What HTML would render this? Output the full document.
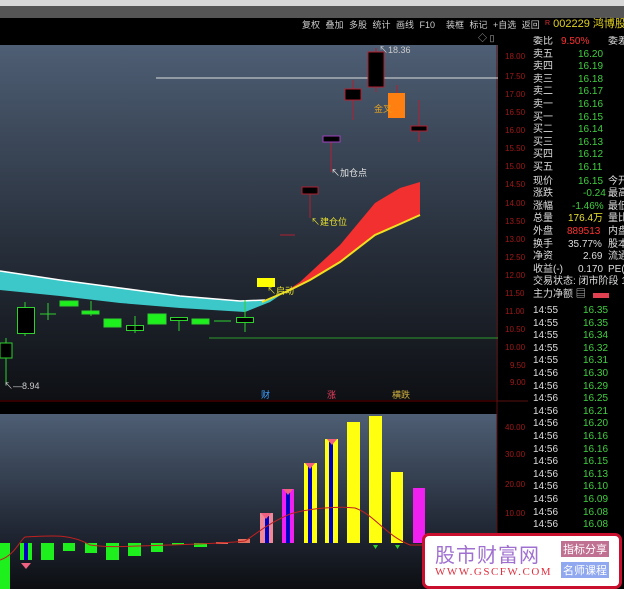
<!DOCTYPE html>
<html><head><meta charset="utf-8"><style>
body{margin:0;width:624px;height:589px;overflow:hidden;background:#000;font-family:"Liberation Sans","Noto Sans CJK SC",sans-serif;position:relative}
.t{position:absolute;font-size:10px;white-space:nowrap;line-height:12px}
.ax{position:absolute;left:505px;font-size:8px;color:#a01818}
.w{color:#e8e8e8}.g{color:#3fcf3f}.r{color:#ff3030}.y{color:#e8e030}
.rp div{white-space:nowrap;position:relative;height:12.6px}
</style></head><body>
<div style="position:absolute;left:0;top:0;width:624px;height:6px;background:#d8d8d8"></div>
<div style="position:absolute;left:0;top:6px;width:624px;height:12px;background:#555"></div>
<div class="t w" style="left:302px;top:19px;font-size:9px;color:#ccc;word-spacing:3px">复权 叠加 多股 统计 画线 F10 &nbsp;装框 标记 +自选 返回</div>
<div class="t" style="left:545px;top:18px;font-size:11px;color:#e0d020"><span style="color:#e03030;font-size:7px;vertical-align:top">R</span> 002229 鸿博股份</div>
<div class="t" style="left:478px;top:32px;color:#aaa;font-size:9px">◇ ▯</div>
<svg style="position:absolute;left:0;top:0" width="624" height="589">
<defs>
<linearGradient id="bg" x1="0" y1="0" x2="0" y2="1"><stop offset="0" stop-color="#4e5e74"/><stop offset="0.55" stop-color="#28303c"/><stop offset="1" stop-color="#0e1014"/></linearGradient>
<linearGradient id="bg2" x1="0" y1="0" x2="0" y2="1"><stop offset="0" stop-color="#4e5e74"/><stop offset="0.7" stop-color="#1e2430"/><stop offset="1" stop-color="#0c0e12"/></linearGradient>
</defs>
<rect x="0" y="45" width="498" height="355" fill="url(#bg)"/>
<line x1="0" y1="401" x2="498" y2="401" stroke="#600" />
<rect x="0" y="414" width="497" height="175" fill="url(#bg2)"/>
<line x1="497" y1="45" x2="497" y2="589" stroke="#5a1010"/>
<line x1="497" y1="401" x2="528" y2="401" stroke="#5a1010"/>
<line x1="156" y1="78" x2="498" y2="78" stroke="#ddd"/>
<line x1="209" y1="338" x2="498" y2="338" stroke="#2c9a2c"/>
<path d="M0,271 L60,280 L120,288 L180,296 L240,301 L265,300 L285,292 L270,302 L245,312 L180,308 L120,303 L60,296 L0,290Z" fill="#3cc8c8"/>
<path d="M0,271 L60,280 L120,288 L180,296 L240,301 L265,300" stroke="#fff" fill="none" stroke-width="1.5"/>
<path d="M285,292 L300,282 L340,245 L375,203 L400,188 L420,182 L420,215 L375,235 L340,262 L310,280Z" fill="#f23030"/>
<path d="M262,302 L290,290 L310,280 L340,262 L375,235 L400,224 L420,215" stroke="#f0e020" stroke-width="2" fill="none"/>
<g stroke="#2ed02e" fill="none">
<line x1="6" y1="338" x2="6" y2="385"/><rect x="0" y="343" width="12" height="15" fill="#000"/>
<line x1="25" y1="302" x2="25" y2="336"/><rect x="17.5" y="307.5" width="17" height="26" fill="#000"/>
<line x1="48" y1="303" x2="48" y2="320"/><line x1="40" y1="314" x2="56" y2="314"/>
<rect x="60" y="301" width="18" height="5" fill="#1ef01e"/>
<line x1="91" y1="301" x2="91" y2="316"/><rect x="82" y="311" width="17" height="3" fill="#1ef01e"/>
<rect x="104" y="319" width="17" height="8" fill="#1ef01e"/>
<rect x="126.5" y="325.5" width="17" height="5" fill="#000"/><line x1="135" y1="316" x2="135" y2="333"/>
<rect x="148" y="314" width="18" height="10" fill="#1ef01e"/>
<line x1="179" y1="318" x2="179" y2="331"/><rect x="170.5" y="317.5" width="17" height="3" fill="#000"/>
<rect x="192" y="319" width="17" height="5" fill="#1ef01e"/>
<line x1="214" y1="321" x2="231" y2="321"/>
<line x1="245" y1="300" x2="245" y2="332"/><rect x="236.5" y="317.5" width="17" height="5" fill="#000"/>
</g>
<g stroke="#b02030">
<line x1="310" y1="187" x2="310" y2="218"/><rect x="302" y="187" width="16" height="7" fill="#000"/>
<line x1="331" y1="139" x2="331" y2="172"/><rect x="323" y="136" width="17" height="6" fill="#000" stroke="#a040c0"/>
<line x1="353" y1="80" x2="353" y2="120"/><rect x="345" y="89" width="16" height="11" fill="#000"/>
<line x1="376" y1="48" x2="376" y2="92"/><rect x="368" y="52" width="16" height="35" fill="#000"/>
<line x1="397" y1="85" x2="397" y2="93"/><rect x="388" y="93" width="17" height="25" fill="#ff8010" stroke="none"/>
<line x1="419" y1="100" x2="419" y2="142"/><rect x="411" y="126" width="16" height="5" fill="#000"/>
<line x1="280" y1="235" x2="295" y2="235"/>
</g>
<rect x="257" y="278" width="18" height="9" fill="#ffff00"/>
<g>
<rect x="0" y="543" width="10" height="46" fill="#1ef01e"/>
<rect x="20" y="543" width="12" height="17" fill="#1ef01e"/><rect x="24" y="543" width="4" height="17" fill="#0000c0"/>
<rect x="41" y="543" width="13" height="17" fill="#1ef01e"/>
<rect x="63" y="543" width="12" height="8" fill="#1ef01e"/>
<rect x="85" y="543" width="12" height="10" fill="#1ef01e"/>
<rect x="106" y="543" width="13" height="17" fill="#1ef01e"/>
<rect x="128" y="543" width="13" height="13" fill="#1ef01e"/>
<rect x="151" y="543" width="12" height="9" fill="#1ef01e"/>
<rect x="172" y="543" width="12" height="2" fill="#1ef01e"/>
<rect x="194" y="543" width="13" height="4" fill="#1ef01e"/>
<rect x="216" y="542" width="12" height="2" fill="#e07060"/>
<rect x="238" y="539" width="12" height="4" fill="#e07060"/>
<rect x="260" y="513" width="13" height="30" fill="#f08898"/><rect x="265" y="516" width="4" height="27" fill="#0000c0"/>
<rect x="282" y="489" width="12" height="54" fill="#f020f0"/><rect x="286" y="492" width="4" height="51" fill="#0000c0"/>
<rect x="304" y="463" width="13" height="80" fill="#ffff10"/><rect x="308" y="466" width="4" height="77" fill="#0000c0"/>
<rect x="325" y="439" width="13" height="104" fill="#ffff10"/><rect x="329" y="442" width="4" height="101" fill="#0000c0"/>
<rect x="347" y="422" width="13" height="121" fill="#ffff10"/>
<rect x="369" y="416" width="13" height="127" fill="#ffff10"/>
<rect x="391" y="472" width="12" height="71" fill="#ffff10"/>
<rect x="413" y="488" width="12" height="55" fill="#f020f0"/>
<g fill="#f06080"><path d="M21,563 h10 l-5,6z"/><path d="M261,513 h10 l-5,6z"/><path d="M283,489 h10 l-5,6z"/><path d="M305,463 h10 l-5,6z"/><path d="M327,439 h10 l-5,6z"/></g>
<g fill="#2ed02e"><path d="M373,545 h5 l-2.5,4z"/><path d="M395,545 h5 l-2.5,4z"/></g>
</g>
<path d="M0,560 C15,555 20,540 25,537 C50,536 70,533 90,545 C110,548 130,546 170,545 C200,544 230,543 245,541 C255,535 265,525 290,514 C310,508 340,506 355,508 C375,515 385,535 410,545 L425,545" stroke="#c02020" fill="none"/>
</svg>
<div class="t w" style="left:379px;top:44px;font-size:9px;color:#ccc">↖18.36</div>
<div class="t" style="left:374px;top:103px;font-size:9px;color:#e0a020">金叉</div>
<div class="t w" style="left:331px;top:167px;font-size:9px">↖加仓点</div>
<div class="t y" style="left:311px;top:216px;font-size:9px">↖建仓位</div>
<div class="t y" style="left:267px;top:285px;font-size:9px">↖启动</div>
<div class="t w" style="left:4px;top:380px;font-size:9px;color:#ccc">↖—8.94</div>
<div class="t" style="left:261px;top:389px;font-size:9px;color:#40a0ff">财</div>
<div class="t" style="left:327px;top:389px;font-size:9px;color:#f04060">涨</div>
<div class="t" style="left:392px;top:389px;font-size:9px;color:#d0b040">横跌</div>
<div class="ax" style="top:52px">18.00</div><div class="ax" style="top:72px">17.50</div><div class="ax" style="top:90px">17.00</div><div class="ax" style="top:108px">16.50</div><div class="ax" style="top:126px">16.00</div><div class="ax" style="top:144px">15.50</div><div class="ax" style="top:162px">15.00</div><div class="ax" style="top:180px">14.50</div><div class="ax" style="top:199px">14.00</div><div class="ax" style="top:217px">13.50</div><div class="ax" style="top:235px">13.00</div><div class="ax" style="top:253px">12.50</div><div class="ax" style="top:271px">12.00</div><div class="ax" style="top:289px">11.50</div><div class="ax" style="top:307px">11.00</div><div class="ax" style="top:325px">10.50</div><div class="ax" style="top:343px">10.00</div><div class="ax" style="top:361px;left:510px">9.50</div><div class="ax" style="top:378px;left:510px">9.00</div>
<div class="ax" style="top:423px">40.00</div><div class="ax" style="top:450px">30.00</div><div class="ax" style="top:480px">20.00</div><div class="ax" style="top:509px">10.00</div>
<div class="rp" style="position:absolute;left:533px;top:36px;width:91px;overflow:hidden;font-size:10px;line-height:12.6px;color:#ddd">
<div>委比<span class="r" style="position:absolute;left:28px">9.50%</span><span style="position:absolute;left:75px">委差</span></div>
<div>卖五<span class="g" style="position:absolute;left:45px">16.20</span></div>
<div>卖四<span class="g" style="position:absolute;left:45px">16.19</span></div>
<div>卖三<span class="g" style="position:absolute;left:45px">16.18</span></div>
<div>卖二<span class="g" style="position:absolute;left:45px">16.17</span></div>
<div>卖一<span class="g" style="position:absolute;left:45px">16.16</span></div>
<div>买一<span class="g" style="position:absolute;left:45px">16.15</span></div>
<div>买二<span class="g" style="position:absolute;left:45px">16.14</span></div>
<div>买三<span class="g" style="position:absolute;left:45px">16.13</span></div>
<div>买四<span class="g" style="position:absolute;left:45px">16.12</span></div>
<div>买五<span class="g" style="position:absolute;left:45px">16.11</span></div>
<div style="margin-top:1px">现价<span class="g" style="position:absolute;left:45px">16.15</span><span style="position:absolute;left:75px">今开</span></div>
<div>涨跌<span class="g" style="position:absolute;left:50px">-0.24</span><span style="position:absolute;left:75px">最高</span></div>
<div>涨幅<span class="g" style="position:absolute;left:39px">-1.46%</span><span style="position:absolute;left:75px">最低</span></div>
<div>总量<span class="y" style="position:absolute;left:35px">176.4万</span><span style="position:absolute;left:75px">量比</span></div>
<div>外盘<span class="r" style="position:absolute;left:34px">889513</span><span style="position:absolute;left:75px">内盘</span></div>
<div>换手<span style="position:absolute;left:35px">35.77%</span><span style="position:absolute;left:75px">股本</span></div>
<div>净资<span style="position:absolute;left:50px">2.69</span><span style="position:absolute;left:75px">流通</span></div>
<div>收益(-)<span style="position:absolute;left:45px">0.170</span><span style="position:absolute;left:75px">PE(</span></div>
<div>交易状态: 闭市阶段 15:</div>
<div>主力净额 ▤<span style="position:absolute;left:60px;top:4px;width:16px;height:5px;background:#e04050"></span></div>
</div>
<div style="position:absolute;left:533px;top:305px;font-size:10px;line-height:12.6px;color:#ddd">
<div>14:55</div><div>14:55</div><div>14:55</div><div>14:55</div><div>14:55</div><div>14:56</div><div>14:56</div><div>14:56</div><div>14:56</div><div>14:56</div><div>14:56</div><div>14:56</div><div>14:56</div><div>14:56</div><div>14:56</div><div>14:56</div><div>14:56</div><div>14:56</div><div>14:56</div></div>
<div class="g" style="position:absolute;left:583px;top:305px;font-size:10px;line-height:12.6px">
<div>16.35</div><div>16.35</div><div>16.34</div><div>16.32</div><div>16.31</div><div>16.30</div><div>16.29</div><div>16.25</div><div>16.21</div><div>16.20</div><div>16.16</div><div>16.16</div><div>16.15</div><div>16.13</div><div>16.10</div><div>16.09</div><div>16.08</div><div>16.08</div><div>16.08</div></div>
<div style="position:absolute;left:422px;top:533px;width:194px;height:50px;background:#fff;border:3px solid #c8102e;border-radius:7px">
<div style="position:absolute;left:10px;top:3px;font-size:20px;color:#a070d0;letter-spacing:1px">股市财富网</div>
<div style="position:absolute;left:10px;top:30px;font-family:'Liberation Serif',serif;font-size:11px;color:#e03040;letter-spacing:1.5px">WWW.GSCFW.COM</div>
<div style="position:absolute;left:136px;top:5px;background:#c07090;color:#fff;font-size:11px;padding:0 2px">指标分享</div>
<div style="position:absolute;left:136px;top:26px;background:#90a8f0;color:#fff;font-size:11px;padding:0 2px">名师课程</div>
</div>
</body></html>
